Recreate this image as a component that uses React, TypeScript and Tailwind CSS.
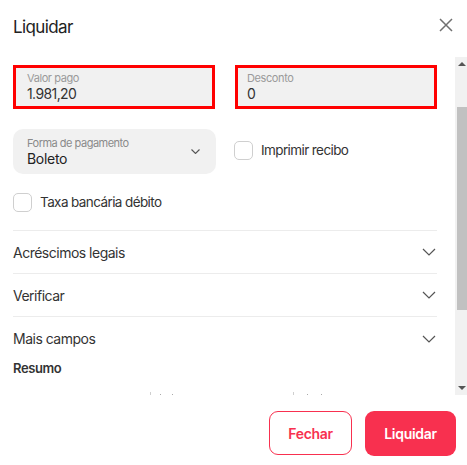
import React from "react";

function Chevron({ className = "" }: { className?: string }) {
  return (
    <svg width="14" height="8" viewBox="0 0 14 8" className={className} fill="none">
      <path d="M1 1L7 7L13 1" stroke="#555" strokeWidth="1.2" />
    </svg>
  );
}

function Checkbox({ label }: { label: string }) {
  return (
    <div className="flex items-center gap-[8px]">
      <div className="w-[19px] h-[19px] rounded-[5px] border border-[#cfcfcf] bg-white" />
      <span className="text-[13.5px] text-[#333] tracking-[-0.6px]">{label}</span>
    </div>
  );
}

function AccRow({ label, divider = true }: { label: string; divider?: boolean }) {
  return (
    <div className={`flex items-center justify-between h-[43px] pr-[1px] ${divider ? "border-b border-[#ececec]" : ""}`}>
      <span className="text-[14px] text-[#333] tracking-[-0.5px]">{label}</span>
      <Chevron />
    </div>
  );
}

export default function App() {
  return (
    <div
      className="w-[467px] h-[465px] bg-white flex flex-col overflow-hidden"
      style={{ fontFamily: "Inter, 'Noto Sans', sans-serif" }}
    >
      <div className="h-[57px] flex items-start justify-between pl-[13px] pr-[14px] pt-[16px]">
        <span className="text-[17px] text-[#222] leading-[22px] tracking-[-0.6px]">Liquidar</span>
        <svg width="14" height="14" viewBox="0 0 14 14" className="mt-[2px]">
          <path d="M1 1L13 13M13 1L1 13" stroke="#707070" strokeWidth="1.5" />
        </svg>
      </div>
      <div className="h-[338px] flex">
        <div className="flex-1 pl-[13px] pr-[18px] overflow-hidden">
          <div className="grid grid-cols-2 gap-[20px] mt-[8px]">
            <div className="h-[44px] border-[3px] border-[#ff0000] bg-[#f1f1f1] pl-[11px] pt-[3px]">
              <div className="text-[11px] leading-[14px] text-[#9a9a9a] tracking-[-0.4px]">Valor pago</div>
              <div className="text-[14px] leading-[18px] text-[#333] tracking-[-0.6px]">1.981,20</div>
            </div>
            <div className="h-[44px] border-[3px] border-[#ff0000] bg-[#f1f1f1] pl-[9px] pt-[3px]">
              <div className="text-[11px] leading-[14px] text-[#9a9a9a] tracking-[-0.4px]">Desconto</div>
              <div className="text-[14px] leading-[18px] text-[#333]">0</div>
            </div>
          </div>
          <div className="grid grid-cols-2 gap-[18px] mt-[20px] items-center">
            <div className="h-[45px] rounded-[10px] bg-[#f1f1f1] pl-[14px] pr-[15px] flex items-center justify-between">
              <div className="pt-[1px]">
                <div className="text-[11px] leading-[14px] text-[#8a8a8a] tracking-[-0.5px]">Forma de pagamento</div>
                <div className="text-[14px] leading-[18px] text-[#222] tracking-[-0.3px]">Boleto</div>
              </div>
              <svg width="9" height="5" viewBox="0 0 9 5" fill="none" className="mr-[1px]">
                <path d="M0.5 0.5L4.5 4.5L8.5 0.5" stroke="#555" strokeWidth="1.1" />
              </svg>
            </div>
            <div className="-mt-[2px]">
              <Checkbox label="Imprimir recibo" />
            </div>
          </div>
          <div className="mt-[18px]">
            <Checkbox label="Taxa bancária débito" />
          </div>
          <div className="mt-[18px] border-t border-[#ececec]">
            <AccRow label="Acréscimos legais" />
            <AccRow label="Verificar" />
            <AccRow label="Mais campos" divider={false} />
          </div>
          <div className="-mt-[1px] text-[13px] font-semibold text-[#333] leading-[18px] tracking-[-0.4px]">Resumo</div>
          <div className="flex mt-[15px] h-[4px] items-start">
            <div className="ml-[137px] w-[1px] h-[4px] bg-[#cfcfcf]" />
            <div className="ml-[9px] mt-[2px] w-[1px] h-[1px] bg-[#aaa]" />
            <div className="ml-[11px] mt-[2px] w-[1px] h-[1px] bg-[#aaa]" />
            <div className="ml-[120px] w-[1px] h-[4px] bg-[#cfcfcf]" />
            <div className="ml-[13px] mt-[2px] w-[1px] h-[1px] bg-[#aaa]" />
            <div className="ml-[13px] mt-[2px] w-[1px] h-[1px] bg-[#aaa]" />
          </div>
        </div>
        <div className="w-[12px] bg-[#f1f1f1] flex flex-col items-center">
          <div className="h-[14px] flex items-center justify-center w-full">
            <div className="w-0 h-0 border-l-[4px] border-r-[4px] border-b-[4px] border-l-transparent border-r-transparent border-b-[#555] ml-[2px]" />
          </div>
          <div className="mt-[36px] ml-[2px] w-[10px] h-[203px] bg-[#c1c1c1]" />
          <div className="flex-1" />
          <div className="h-[14px] flex items-center justify-center w-full">
            <div className="w-0 h-0 border-l-[4px] border-r-[4px] border-t-[4px] border-l-transparent border-r-transparent border-t-[#555] ml-[2px]" />
          </div>
        </div>
      </div>
      <div className="flex-1 flex justify-end items-start pt-[16px] pr-[11px] gap-[13px]">
        <button className="w-[83px] h-[44px] rounded-[9px] border border-[#f8304f] bg-white text-[#f8304f] text-[14px] font-semibold tracking-[-0.3px]">
          Fechar
        </button>
        <button className="w-[91px] h-[45px] rounded-[9px] bg-[#f8304f] text-white text-[14px] font-semibold tracking-[-0.3px]">
          Liquidar
        </button>
      </div>
    </div>
  );
}
